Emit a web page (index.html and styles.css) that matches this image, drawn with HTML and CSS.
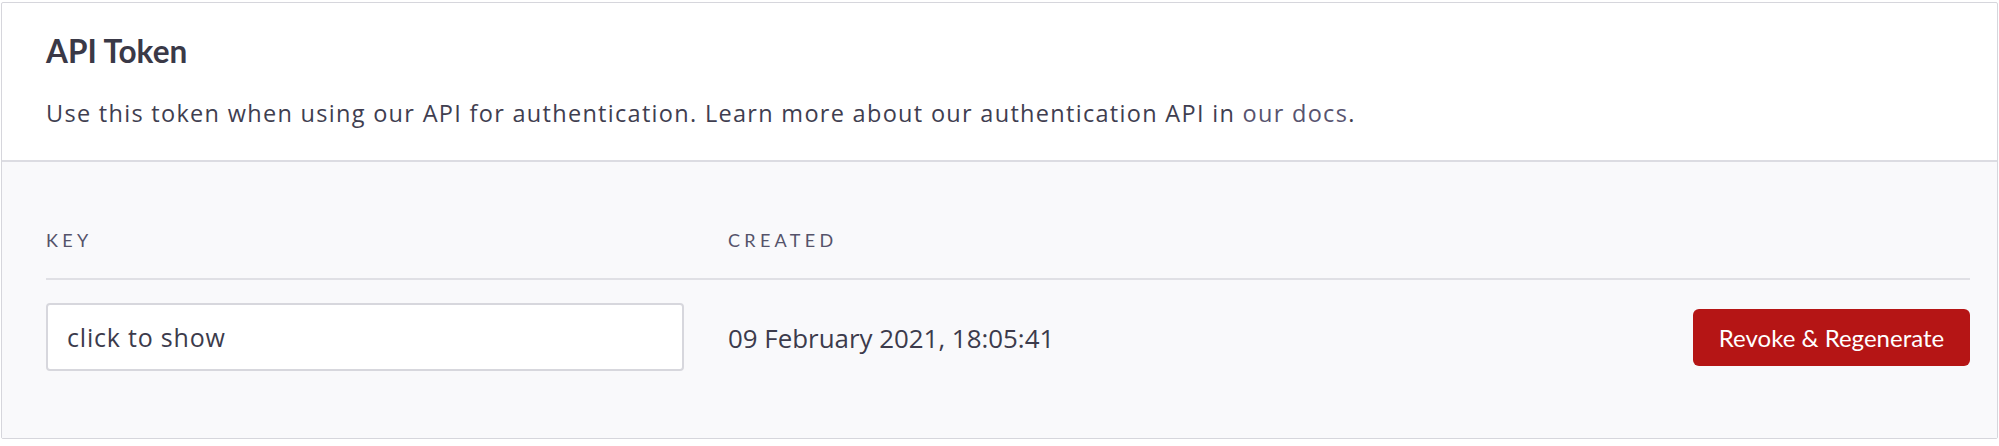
FILE: index.html
```html
<!DOCTYPE html>
<html lang="en">
<head>
<meta charset="utf-8">
<title>API Token</title>
<link rel="stylesheet" href="styles.css">
</head>
<body>
<div class="page">
  <section class="card">
    <header class="card-head">
      <h2 class="title">API Token</h2>
      <p class="desc">Use this token when using our API for authentication. Learn more about our authentication API in <a class="link" href="#">our docs</a>.</p>
    </header>
    <div class="card-body">
      <div class="table">
        <div class="th">Key</div>
        <div class="th">Created</div>
        <div class="th"></div>
        <div class="td"><div class="keybox">click to show</div></div>
        <div class="td date">09 February 2021, 18:05:41</div>
        <div class="td action"><button class="btn-danger" type="button">Revoke &amp; Regenerate</button></div>
      </div>
    </div>
  </section>
</div>
</body>
</html>
```
FILE: styles.css
```css
html, body {
  margin: 0;
  padding: 0;
  background: #ffffff;
}
body {
  font-family: Lato, "Open Sans", "Liberation Sans", sans-serif;
  color: #3c3b4c;
}
.page {
  padding: 2px 1px 6px 1px;
}
.card {
  border: 1px solid #d6d6dc;
  border-radius: 2px;
  background: #ffffff;
}
.card-head {
  padding: 30px 44px 32px 44px;
  border-bottom: 2px solid #dcdce2;
}
.title {
  margin: 0;
  font-size: 31.5px;
  line-height: 36px;
  font-weight: 700;
  color: #3a3947;
}
.desc {
  margin: 30px 0 0 0;
  font-family: "Open Sans", Lato, sans-serif;
  font-size: 23.5px;
  letter-spacing: 1.3px;
  line-height: 29px;
  color: #3f3e50;
}
.link {
  color: #58546f;
  text-decoration: none;
}
.card-body {
  background: #f9f9fb;
  padding: 67px 27px 67px 44px;
}
.table {
  display: grid;
  grid-template-columns: 682px 1fr auto;
  align-items: stretch;
}
.th {
  font-size: 18px;
  line-height: 22px;
  letter-spacing: 4.3px;
  text-transform: uppercase;
  color: #55536a;
  padding-bottom: 27px;
  border-bottom: 2px solid #e0e0e5;
  margin-bottom: 23px;
}
.td {
  align-self: center;
}
.keybox {
  width: 638px;
  height: 68px;
  box-sizing: border-box;
  border: 2px solid #d7d7dd;
  border-radius: 4px;
  background: #ffffff;
  display: flex;
  align-items: center;
  padding: 0 19px;
  font-family: "Open Sans", Lato, sans-serif;
  font-size: 25px;
  letter-spacing: 0.8px;
  color: #3c3b4c;
}
.date {
  font-family: "Open Sans", Lato, sans-serif;
  font-size: 25.9px;
  color: #3c3b4c;
  padding-top: 2px;
}
.action {
  display: flex;
  justify-content: flex-end;
}
.btn-danger {
  height: 57px;
  width: 277px;
  border: 0;
  border-radius: 6px;
  background: #b51515;
  color: #ffffff;
  font-family: inherit;
  font-size: 24px;
  padding: 0;
  cursor: pointer;
}
```
